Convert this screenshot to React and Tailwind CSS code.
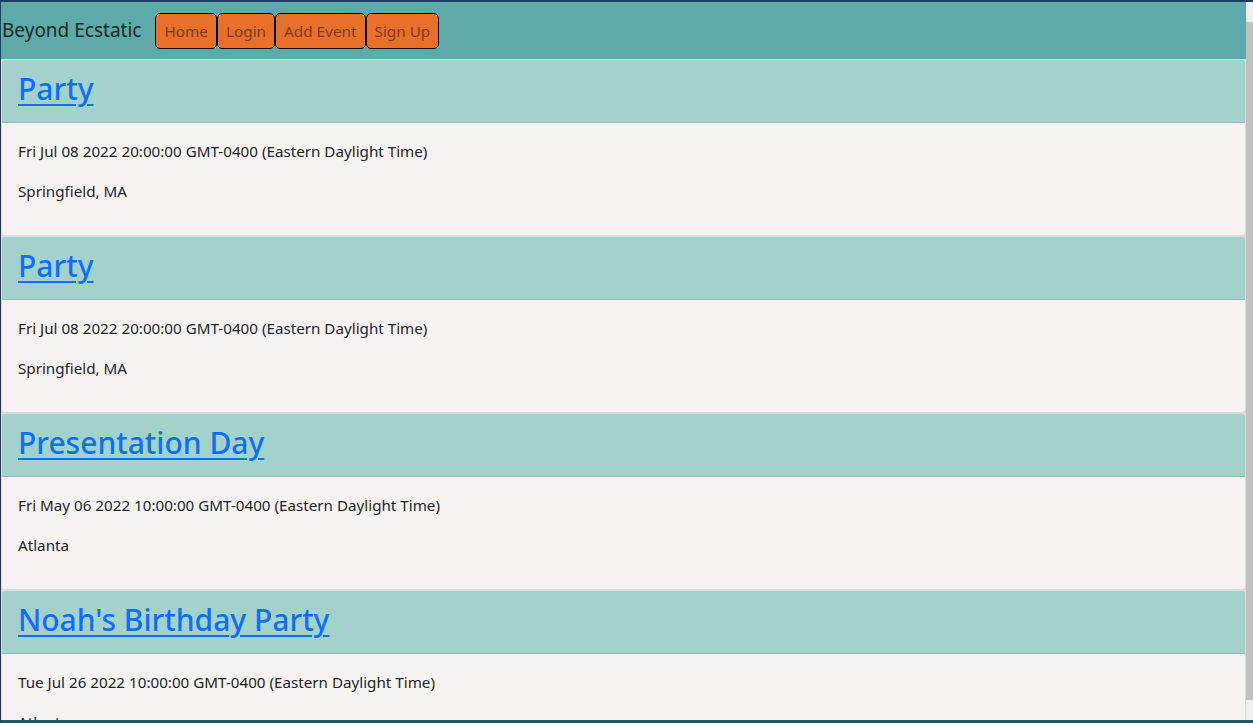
import React from "react";

const events = [
  { title: "Party", date: "Fri Jul 08 2022 20:00:00 GMT-0400 (Eastern Daylight Time)", place: "Springfield, MA" },
  { title: "Party", date: "Fri Jul 08 2022 20:00:00 GMT-0400 (Eastern Daylight Time)", place: "Springfield, MA" },
  { title: "Presentation Day", date: "Fri May 06 2022 10:00:00 GMT-0400 (Eastern Daylight Time)", place: "Atlanta" },
  { title: "Noah's Birthday Party", date: "Tue Jul 26 2022 10:00:00 GMT-0400 (Eastern Daylight Time)", place: "Atlanta" },
];

function Card({ e }) {
  return (
    <div className="border border-[#dcdcdc] rounded-[4px] overflow-hidden shrink-0">
      <div className="bg-[#a3d2ca] px-4 pt-2 pb-2 border-b border-[#8fbab3] h-[63px]">
        <h2 className="text-[30px] leading-[41px] font-medium">
          <a href="#" className="text-[#0d6efd] underline decoration-[2px] underline-offset-[4px]">{e.title}</a>
        </h2>
      </div>
      <div className="bg-[#f7f2f2] p-4 h-[112px] text-[#212529] text-[15.2px] leading-[24px]">
        <p className="mb-4">{e.date}</p>
        <p>{e.place}</p>
      </div>
    </div>
  );
}

export default function App() {
  return (
    <div className="h-[723px] w-[1253px] overflow-hidden bg-[#1d3b63] pt-[2px] pl-[1px] flex flex-col" style={{ fontFamily: '"Noto Sans", "Open Sans", sans-serif' }}>
      <div className="flex flex-1 min-h-0 bg-[#f7f2f2]">
        <div className="flex-1 min-w-0 flex flex-col overflow-hidden">
          <nav className="bg-[#5eaaa8] h-[57px] flex items-center pl-[1px] shrink-0">
            <span className="text-[19px] text-[#1a2a2a] mr-[14px] mb-[1px]">Beyond Ecstatic</span>
            <div className="flex mt-[1px]">
              {["Home", "Login", "Add Event", "Sign Up"].map((b) => (
                <button key={b} className="h-[36px] px-[8px] bg-[#e8702b] border border-black rounded-[5px] text-[15.3px] text-[#7e3a16]">{b}</button>
              ))}
            </div>
          </nav>
          <div className="flex flex-col bg-[#dddddd]">
            {events.map((e, i) => (
              <Card key={i} e={e} />
            ))}
          </div>
        </div>
        <div className="w-[7px] bg-[#f0f0f0] flex flex-col shrink-0">
          <div className="h-[20px]" />
          <div className="flex-1 bg-[#c1c1c1]" />
          <div className="h-[20px]" />
        </div>
      </div>
      <div className="h-[3px] bg-[#1c5a6a]" />
    </div>
  );
}
